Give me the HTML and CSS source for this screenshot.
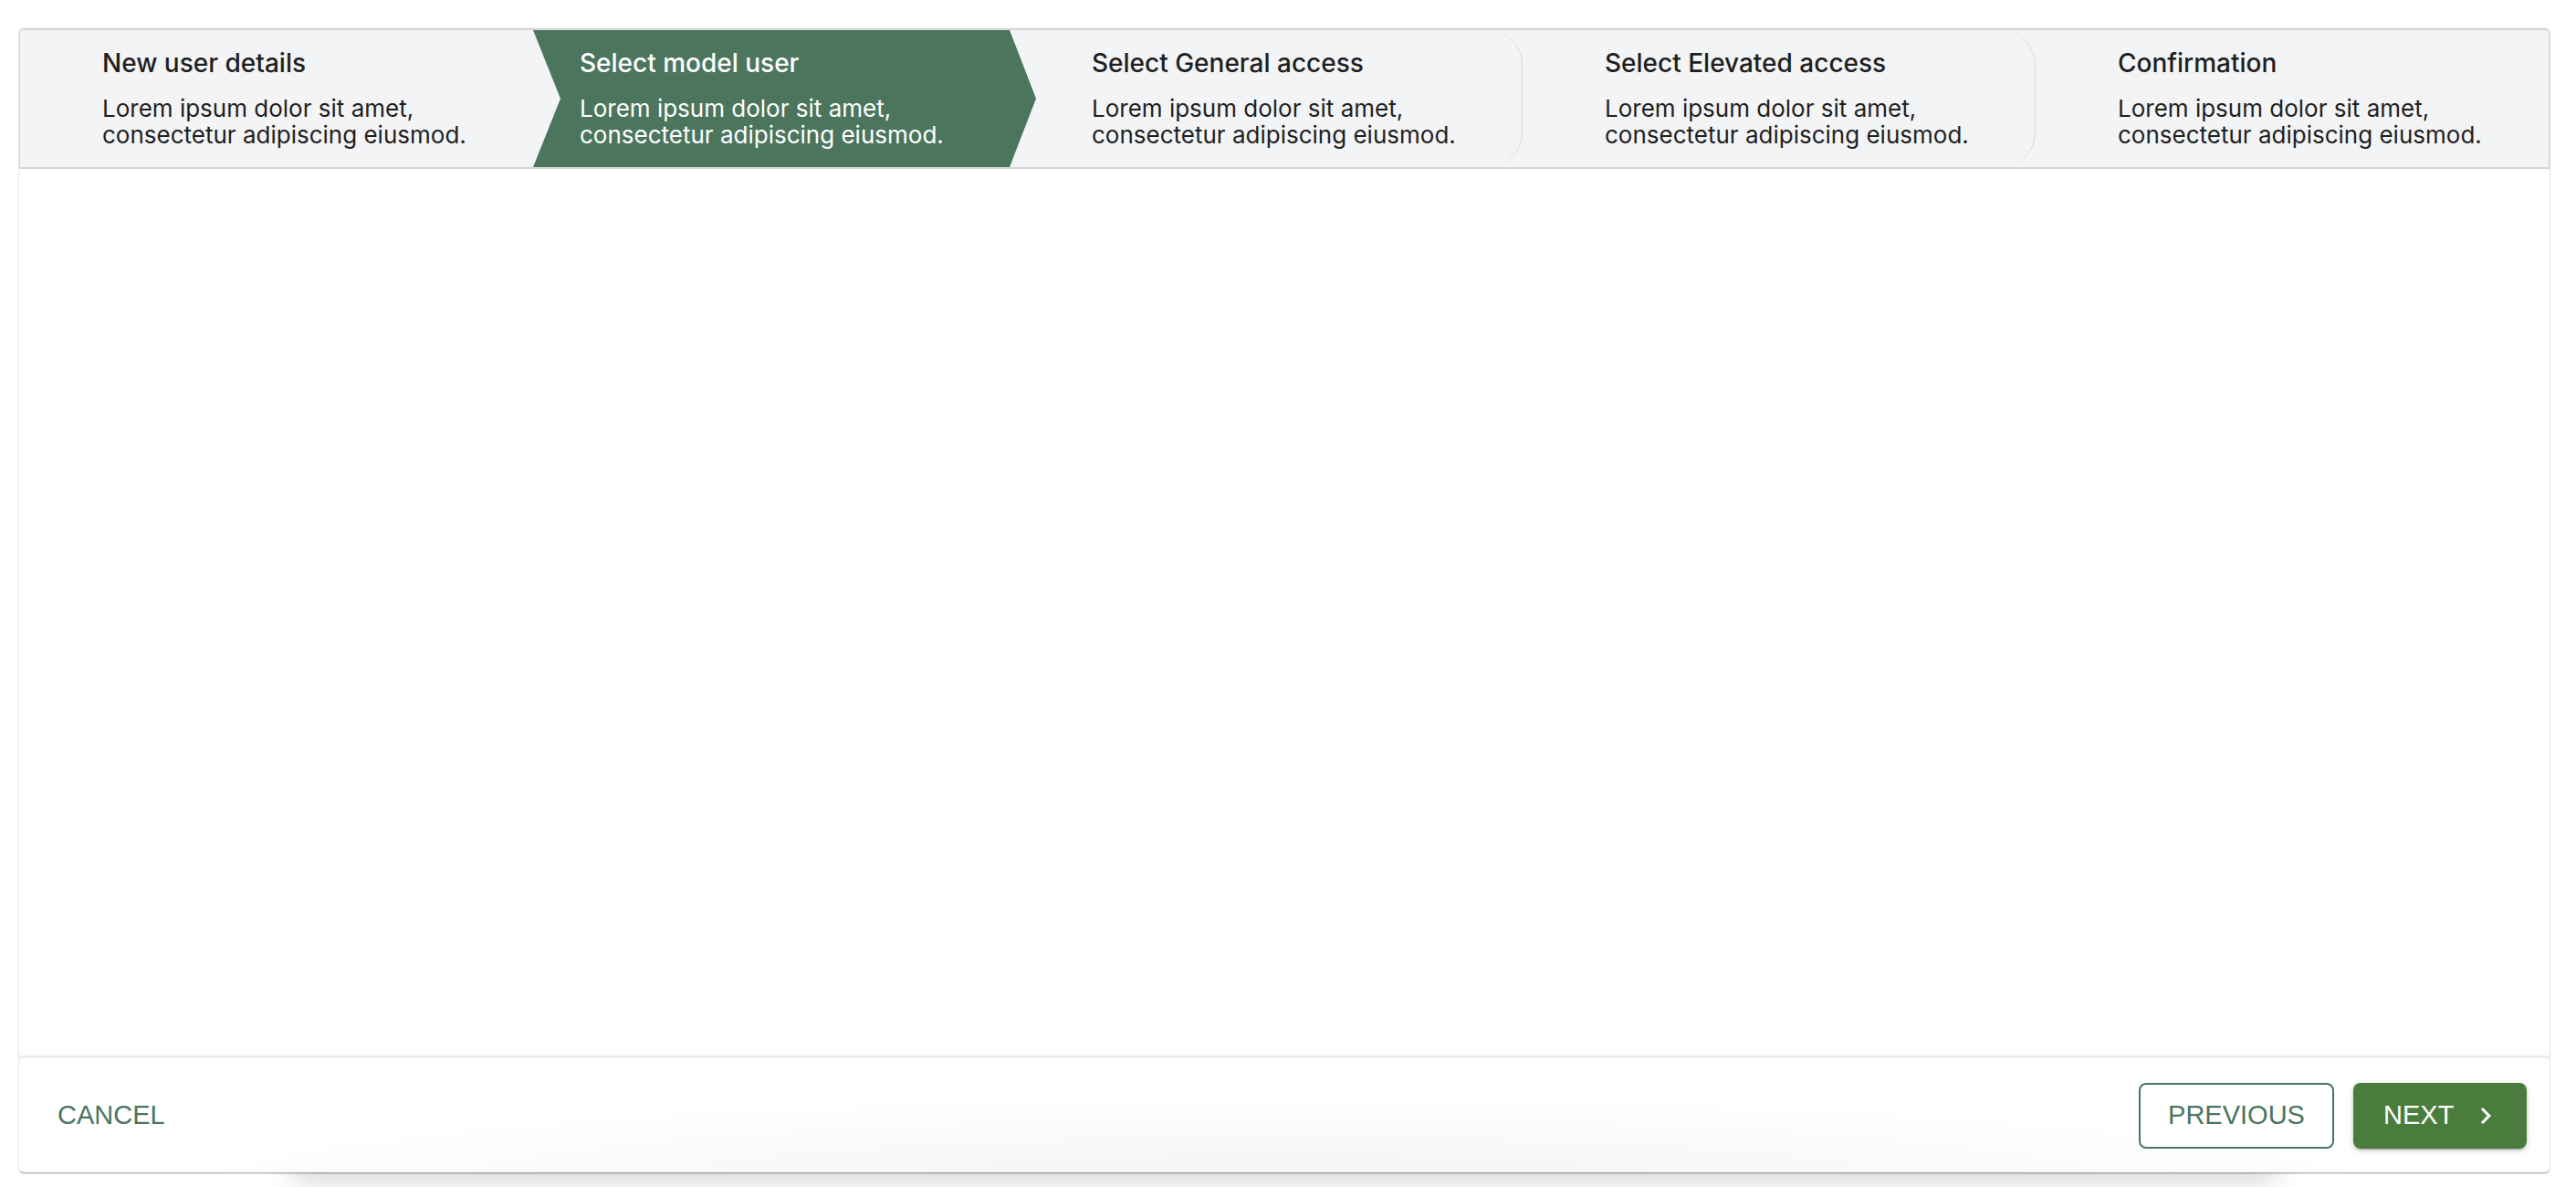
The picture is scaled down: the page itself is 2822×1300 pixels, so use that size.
FILE: index.html
```html
<!DOCTYPE html>
<html lang="en">
<head>
<meta charset="utf-8">
<title>New user wizard</title>
<link rel="stylesheet" href="styles.css">
</head>
<body>
<div class="wizard">
  <ol class="steps">
    <li class="step">
      <div class="step__title">New user details</div>
      <div class="step__desc">Lorem ipsum dolor sit amet,<br>consectetur adipiscing eiusmod.</div>
    </li>
    <li class="step step--active">
      <div class="step__title">Select model user</div>
      <div class="step__desc">Lorem ipsum dolor sit amet,<br>consectetur adipiscing eiusmod.</div>
    </li>
    <li class="step step--upcoming">
      <div class="step__title">Select General access</div>
      <div class="step__desc">Lorem ipsum dolor sit amet,<br>consectetur adipiscing eiusmod.</div>
    </li>
    <li class="step step--upcoming">
      <div class="step__title">Select Elevated access</div>
      <div class="step__desc">Lorem ipsum dolor sit amet,<br>consectetur adipiscing eiusmod.</div>
    </li>
    <li class="step">
      <div class="step__title">Confirmation</div>
      <div class="step__desc">Lorem ipsum dolor sit amet,<br>consectetur adipiscing eiusmod.</div>
    </li>
  </ol>
  <div class="wizard__body"></div>
  <div class="wizard__footer">
    <button class="btn btn--text">Cancel</button>
    <div class="wizard__nav">
      <button class="btn btn--outlined">Previous</button>
      <button class="btn btn--contained">Next
        <svg class="btn__icon" viewBox="0 0 24 24" aria-hidden="true"><path d="M10 6 8.59 7.41 13.17 12l-4.58 4.59L10 18l6-6z"/></svg>
      </button>
    </div>
  </div>
</div>
</body>
</html>
```
FILE: styles.css
```css
html, body {
  margin: 0;
  padding: 0;
  background: #ffffff;
}

body {
  padding: 31px 29px 16px 21px;
  font-family: "Inter", "Noto Sans", sans-serif;
}

.wizard {
  box-sizing: border-box;
  height: 1253px;
  display: flex;
  flex-direction: column;
  background: #ffffff;
  border-radius: 5px;
  box-shadow:
    0 0 0 1px rgba(0, 0, 0, 0.05),
    0 2px 2px -1px rgba(0, 0, 0, 0.28),
    0 1px 2px rgba(0, 0, 0, 0.12),
    0 310px 30px -300px rgba(0, 0, 0, 0.16);
}

/* ---------- step header ---------- */
.steps {
  box-sizing: border-box;
  list-style: none;
  margin: 0;
  padding: 0;
  height: 154px;
  display: grid;
  grid-template-columns: 522px repeat(4, 1fr);
  background: #f3f4f6;
  border-top: 2px solid #d6d6d6;
  border-bottom: 2px solid #d6d6d6;
  border-left: 1px solid #d3d3d3;
  border-right: 1px solid #d3d3d3;
  border-radius: 5px 5px 0 0;
}

.step {
  box-sizing: border-box;
  position: relative;
  padding: 18px 0 0 90px;
  color: #1f1f1f;
}

.step__title {
  font-size: 28px;
  font-weight: 500;
  line-height: 36px;
  margin-bottom: 18px;
  white-space: nowrap;
}

.step__desc {
  font-size: 26px;
  font-weight: 400;
  line-height: 28.5px;
  white-space: nowrap;
}

.step--upcoming {
  border-right: 1px solid #d9d9d9;
  border-radius: 0 38px 38px 0;
}

.step--active {
  z-index: 1;
  color: #ffffff;
  padding-left: 91px;
}

.step--active::before {
  content: "";
  position: absolute;
  top: 0;
  bottom: 0;
  left: 40px;
  right: -29px;
  z-index: -1;
  background: #4b765d;
  clip-path: polygon(0 0, calc(100% - 29px) 0, 100% 50%, calc(100% - 29px) 100%, 0 100%, 30px 50%);
}

/* ---------- body ---------- */
.wizard__body {
  flex: 1;
}

/* ---------- footer ---------- */
.wizard__footer {
  box-sizing: border-box;
  height: 128px;
  border-top: 3px solid #ececec;
  display: flex;
  align-items: center;
  justify-content: space-between;
  padding: 0 25px 0 21px;
  border-radius: 0 0 5px 5px;
  background: radial-gradient(ellipse 46% 90% at 50% 120%, rgba(0, 0, 0, 0.055), rgba(0, 0, 0, 0) 100%);
}

.wizard__nav {
  display: flex;
  gap: 21px;
}

.btn {
  box-sizing: border-box;
  height: 72px;
  display: inline-flex;
  align-items: center;
  font-family: "Liberation Sans", Arial, sans-serif;
  font-size: 29px;
  font-weight: 400;
  text-transform: uppercase;
  border: 0;
  border-radius: 8px;
  background: transparent;
  cursor: pointer;
}

.btn--text {
  padding: 0 21px;
  color: #4a7560;
}

.btn--outlined {
  width: 214px;
  justify-content: center;
  border: 2px solid #4a7560;
  color: #4a7560;
  background: #ffffff;
}

.btn--contained {
  width: 190px;
  padding: 0 27px 0 33px;
  gap: 17px;
  color: #ffffff;
  background: #4a7c3d;
  box-shadow: 0 3px 2px -2px rgba(0, 0, 0, 0.2), 0 2px 4px rgba(0, 0, 0, 0.14), 0 1px 8px rgba(0, 0, 0, 0.1);
}

.btn__icon {
  width: 36px;
  height: 36px;
  fill: #ffffff;
  flex: none;
}
```
